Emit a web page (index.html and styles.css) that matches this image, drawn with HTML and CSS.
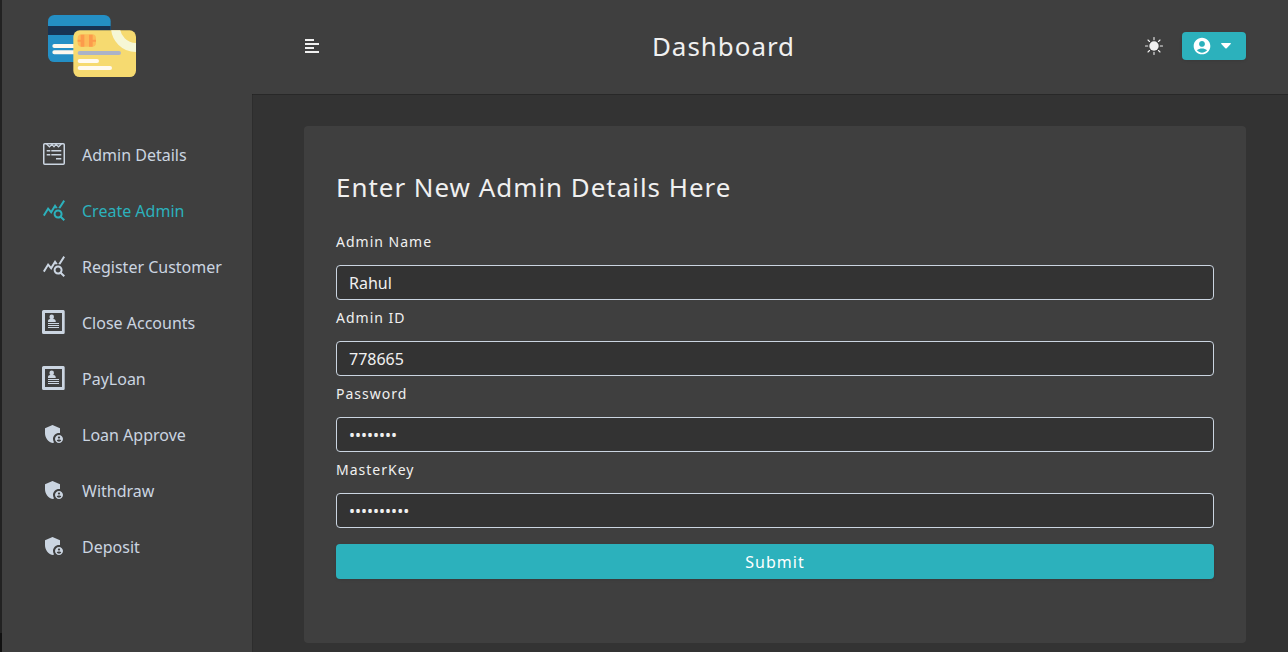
FILE: index.html
```html
<!DOCTYPE html>
<html lang="en">
<head>
<meta charset="utf-8">
<title>Dashboard</title>
<link rel="stylesheet" href="styles.css">
</head>
<body>
<svg class="sprite" aria-hidden="true">
  <symbol id="stats" viewBox="0 0 24 24"><path d="M19.88 18.47c.44-.7.7-1.51.7-2.39 0-2.49-2.01-4.5-4.5-4.5s-4.5 2.01-4.5 4.5 2.01 4.5 4.49 4.5c.88 0 1.7-.26 2.39-.7L21.58 23 23 21.58l-3.12-3.11zm-3.8.11c-1.38 0-2.5-1.12-2.5-2.5s1.12-2.5 2.5-2.5 2.5 1.12 2.5 2.5-1.12 2.5-2.5 2.5zm-.36-8.5c-.74.02-1.45.18-2.1.45l-.55-.83-3.8 6.18-3.01-3.52-3.63 5.81L1 17l5-8 3 3.5L13 6l2.72 4.08zm2.59.5c-.64-.28-1.33-.45-2.05-.49L21.38 2 23 3.18l-4.69 7.4z"/></symbol>
  <symbol id="shield" viewBox="0 0 24 24"><path d="M17 11c.34 0 .67.04 1 .09V6.27L10.5 3 3 6.27v4.91c0 4.54 3.2 8.79 7.5 9.82.55-.13 1.08-.32 1.6-.55-.69-.98-1.1-2.17-1.1-3.45 0-3.31 2.69-6 6-6z"/><path d="M17 13c-2.21 0-4 1.79-4 4s1.79 4 4 4 4-1.79 4-4-1.79-4-4-4zm0 1.38c.62 0 1.12.51 1.12 1.12s-.51 1.12-1.12 1.12-1.12-.51-1.12-1.12.5-1.12 1.12-1.12zm0 5.37c-.93 0-1.74-.46-2.24-1.17.05-.72 1.51-1.08 2.24-1.08s2.19.36 2.24 1.08c-.5.71-1.31 1.17-2.24 1.17z"/></symbol>
  <symbol id="profile" viewBox="0 0 24 24"><path fill-rule="evenodd" d="M1.6 0h19.8a1.3 1.6 0 0 1 1.3 1.6v20.8a1.3 1.6 0 0 1-1.3 1.6H1.6A1.6 1.6 0 0 1 0 22.400V1.600A1.600 1.600 0 0 1 1.600 0zM3 3v18h17V3z"/><circle cx="9.700" cy="6.900" r="2.300"/><path d="M6 12v-1c0-1.500 1.500-2.300 3.700-2.300s4 .8 4 2.300v1zM6 13h11v1.100H6zM6 15h11v1.100H6zM6 17h11v1.100H6z"/></symbol>
  <symbol id="list" viewBox="0 0 24 24"><rect x="1.750" y="1.750" width="20.500" height="20.500" rx="1" fill="none" stroke="currentColor" stroke-width="1.500"/><path fill="none" stroke="currentColor" stroke-width="1.300" d="M4.500 2 7.500 4.800 10 2.400 12 4.800 14 2.400 16.500 4.800 19.500 2"/><path d="M4.700 8h3.600v1.600H4.700zM9.300 8h10v1.600h-10zM4.700 12h3.600v1.500H4.700zM9.300 12h10v1.500h-10zM14 16h5.300v1.600H14z"/></symbol>
</svg>
<div class="app">
  <aside class="sidebar">
    <svg class="logo" viewBox="24 30 264 186">
      <defs><clipPath id="front"><rect x="100" y="76" width="188" height="140" rx="19"/></clipPath></defs>
      <rect x="24" y="30" width="188" height="141" rx="19" fill="#248fc5"/>
      <path fill="#173354" d="M24 63h188v27H24z"/>
      <path stroke="#fcf8ee" stroke-width="12" stroke-linecap="round" d="M43 123h66M43 142h66"/>
      <rect x="100" y="76" width="188" height="140" rx="19" fill="#f6da70"/>
      <g clip-path="url(#front)"><circle cx="288" cy="66" r="61.500" fill="none" stroke="#f6f7d6" stroke-width="27"/></g>
      <rect x="113" y="88" width="55" height="37" rx="12" fill="#fcbb58"/>
      <path fill="#fc9b4b" d="M122 89h11v36h-11zM147 89h11v36h-11zM113 104h20v6h-20zM147 104h21v6h-21z"/>
      <path stroke="#abb3c8" stroke-width="12" stroke-linecap="round" d="M119 144h118"/>
      <path stroke="#fffaf0" stroke-width="12" stroke-linecap="round" d="M119 168h52M119 189h91"/>
    </svg>
    <nav class="links">
      <a class="link"><svg class="icon"><use href="#list"/></svg>Admin Details</a>
      <a class="link active"><svg class="icon"><use href="#stats"/></svg>Create Admin</a>
      <a class="link"><svg class="icon"><use href="#stats"/></svg>Register Customer</a>
      <a class="link"><svg class="icon"><use href="#profile"/></svg>Close Accounts</a>
      <a class="link"><svg class="icon"><use href="#profile"/></svg>PayLoan</a>
      <a class="link"><svg class="icon"><use href="#shield"/></svg>Loan Approve</a>
      <a class="link"><svg class="icon"><use href="#shield"/></svg>Withdraw</a>
      <a class="link"><svg class="icon"><use href="#shield"/></svg>Deposit</a>
    </nav>
  </aside>
  <div class="content">
    <header class="navbar">
      <svg class="toggle" viewBox="0 0 16 16"><path d="M1 1h9v2H1zM1 5h14v2H1zM1 9h9v2H1zM1 13h14v2H1z"/></svg>
      <h1 class="title">Dashboard</h1>
      <div class="actions">
        <svg class="sun" viewBox="0 0 18 18"><circle cx="9" cy="9" r="4.700"/><path stroke="currentColor" stroke-width="1.100" stroke-linecap="round" d="M9 .5v2.200M9 15.300v2.200M.5 9h2.200M15.300 9h2.200M3 3l1.500 1.500M13.500 13.500 15 15M3 15l1.500-1.500M13.500 4.500 15 3"/></svg>
        <button class="user">
          <svg class="avatar" viewBox="0 0 24 24"><path d="M12 2C6.480 2 2 6.480 2 12s4.480 10 10 10 10-4.480 10-10S17.520 2 12 2zm0 4c1.930 0 3.500 1.570 3.500 3.500S13.930 13 12 13s-3.500-1.570-3.500-3.500S10.070 6 12 6zm0 14c-2.030 0-4.430-.82-6.140-2.880C7.550 15.800 9.680 15 12 15s4.450.8 6.140 2.120C16.430 19.180 14.030 20 12 20z"/></svg>
          <svg class="caret" viewBox="0 0 10 6"><path d="M.7 0h8.600q1 .2.400 1.100L5.700 5.200q-.7.600-1.400 0L.3 1.100Q-.3.200.7 0z"/></svg>
        </button>
      </div>
    </header>
    <main class="page">
      <form class="card">
        <h2 class="form-title">Enter New Admin Details Here</h2>
        <label class="label" for="name">Admin Name</label>
        <input class="field" id="name" type="text" value="Rahul">
        <label class="label" for="aid">Admin ID</label>
        <input class="field" id="aid" type="text" value="778665">
        <label class="label" for="pw">Password</label>
        <input class="field" id="pw" type="password" value="aaaaaaaa">
        <label class="label" for="key">MasterKey</label>
        <input class="field" id="key" type="password" value="aaaaaaaaaa">
        <button class="submit" type="button">Submit</button>
      </form>
    </main>
  </div>
</div>
</body>
</html>
```
FILE: styles.css
```css
* { box-sizing: border-box; margin: 0; }
body {
  background: #333;
  color: #f0f0f0;
  font: 16px/24px "Noto Sans", sans-serif;
  overflow: hidden;
}
svg { fill: currentColor; flex: none; }
.sprite { display: none; }
.app {
  display: grid;
  grid-template-columns: 250px 1fr;
  height: 652px;
  padding-left: 2px;
  background: linear-gradient(#222 633px, #111 633px) left / 2px 100% no-repeat;
}
.sidebar {
  background: #3f3f3f;
  box-shadow: 1px 0 0 rgba(0, 0, 0, .1);
  padding-top: 15px;
}
.logo { display: block; width: 88px; height: 62px; margin-left: 46px; }
.links { margin-top: 50px; }
.link {
  display: flex;
  align-items: center;
  gap: 16px;
  height: 56px;
  padding-left: 40px;
  color: #cbd5e1;
}
.link.active { color: #2cb1bc; }
.icon { width: 24px; height: 24px; position: relative; top: -1px; }
.navbar {
  display: flex;
  align-items: center;
  justify-content: space-between;
  height: 94px;
  padding: 0 42px 2px 52px;
  background: #3f3f3f;
  box-shadow: 0 1px 0 rgba(0, 0, 0, .2);
}
.toggle { width: 16px; height: 16px; }
.title {
  font-size: 25.92px;
  font-weight: 400;
  line-height: 34px;
  letter-spacing: 1px;
  margin-right: 18px;
}
.actions { display: flex; align-items: center; gap: 19px; }
.sun { width: 18px; height: 18px; }
.user {
  display: flex;
  align-items: center;
  gap: 9px;
  width: 64px;
  height: 28px;
  padding: 0 0 0 10px;
  border: 0;
  border-radius: 4px;
  background: #2cb1bc;
  color: #fff;
  box-shadow: 0 1px 3px rgba(0, 0, 0, .1);
}
.avatar { width: 20px; height: 20px; }
.caret { width: 10px; height: 6px; }
.page { padding: 32px 42px 0 52px; }
.card {
  display: flex;
  flex-direction: column;
  height: 517px;
  padding: 42px 32px 0;
  border-radius: 4px;
  background: #3f3f3f;
}
.form-title {
  font-size: 25.92px;
  font-weight: 400;
  line-height: 38px;
  letter-spacing: 1px;
  margin-bottom: 18px;
}
.label {
  font-size: 14px;
  line-height: 21px;
  letter-spacing: 1px;
  height: 29px;
  margin-bottom: 12px;
  padding-top: 7px;
}
.field {
  height: 35px;
  padding: 6px 12px;
  border: 1px solid #cbd5e1;
  border-radius: 4px;
  background: #333;
  color: #f0f0f0;
  font: 16px/21px "Noto Sans", sans-serif;
  outline: 0;
}
.submit {
  height: 35px;
  margin-top: 16px;
  border: 0;
  border-radius: 4px;
  background: #2cb1bc;
  color: #fff;
  font: 16px "Noto Sans", sans-serif;
  letter-spacing: 1px;
  box-shadow: 0 1px 3px rgba(0, 0, 0, .1);
}
```
